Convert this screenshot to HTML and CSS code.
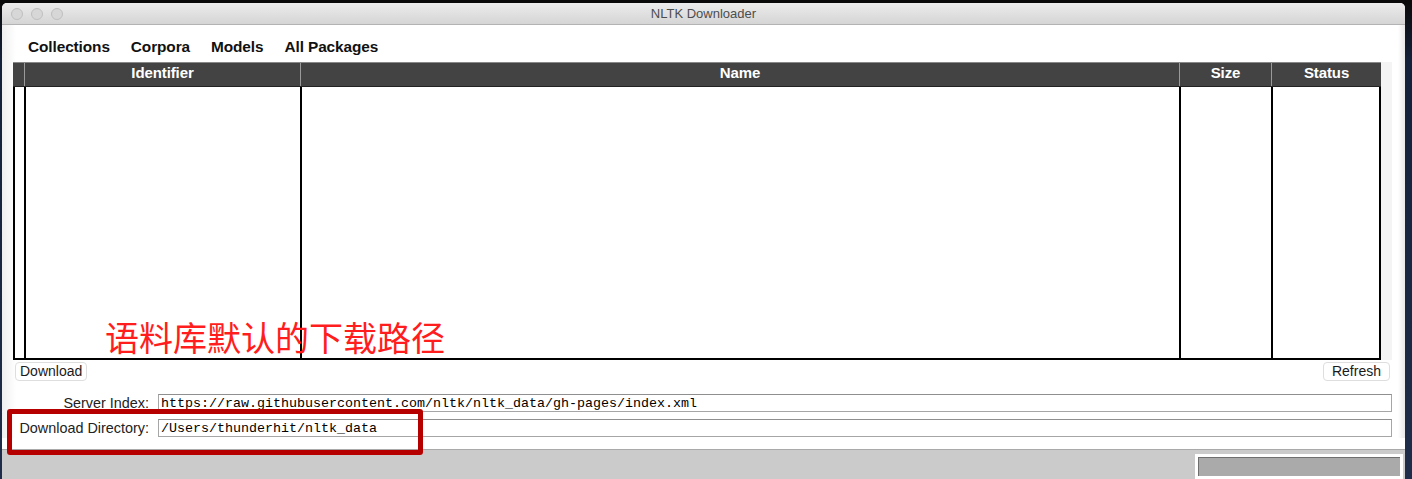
FILE: index.html
```html
<!DOCTYPE html>
<html lang="en">
<head>
<meta charset="utf-8">
<title>NLTK Downloader</title>
<link rel="stylesheet" href="styles.css">
</head>
<body>
<div class="desktop">
  <div class="window">
    <div class="titlebar">
      <div class="lights"><span class="light"></span><span class="light"></span><span class="light"></span></div>
      <div class="title">NLTK Downloader</div>
    </div>
    <div class="content">
      <div class="menubar">
        <span class="menu">Collections</span>
        <span class="menu">Corpora</span>
        <span class="menu">Models</span>
        <span class="menu">All Packages</span>
      </div>
      <div class="tablewrap">
        <div class="table">
          <div class="thead">
            <div class="th"></div>
            <div class="th">Identifier</div>
            <div class="th">Name</div>
            <div class="th">Size</div>
            <div class="th">Status</div>
          </div>
          <div class="tbody">
            <div class="td"></div>
            <div class="td"></div>
            <div class="td"></div>
            <div class="td"></div>
            <div class="td last"></div>
          </div>
        </div>
        <div class="scroll"></div>
      </div>
      <div class="buttons">
        <button class="btn">Download</button>
        <button class="btn refresh">Refresh</button>
      </div>
      <div class="fields">
        <div class="field">
          <span class="label">Server Index:</span>
          <div class="entry">https://raw.githubusercontent.com/nltk/nltk_data/gh-pages/index.xml</div>
        </div>
        <div class="field">
          <span class="label">Download Directory:</span>
          <div class="entry">/Users/thunderhit/nltk_data</div>
        </div>
      </div>
    </div>
    <div class="status">
      <div class="progress"><div class="bar"></div></div>
    </div>
    <div class="note">语料库默认的下载路径</div>
    <div class="highlight"></div>
  </div>
</div>
</body>
</html>
```

FILE: styles.css
```css
html, body {
  margin: 0;
  padding: 0;
  height: 100%;
  overflow: hidden;
}
body {
  background: #0d1627;
  font-family: "Liberation Sans", Arial, sans-serif;
}
.desktop {
  height: 479px;
  width: 1412px;
  background: linear-gradient(180deg, #0a0a0a 0px, #0a0a0a 3px, #14213a 60px, #1f2d4a 479px);
  padding: 3px 0 0 2px;
  box-sizing: border-box;
}
.window {
  position: relative;
  width: 1403px;
  height: 476px;
  background: #ffffff;
  border-radius: 5px 5px 0 0;
  display: flex;
  flex-direction: column;
  overflow: hidden;
}
.titlebar {
  height: 21px;
  background: linear-gradient(180deg, #ececec, #d5d5d5);
  border-bottom: 1px solid #b3b3b3;
  display: flex;
  align-items: center;
  position: relative;
}
.lights {
  display: flex;
  gap: 8px;
  padding-left: 9px;
}
.light {
  width: 10px;
  height: 10px;
  border-radius: 50%;
  border: 1px solid #bfbfbf;
  background: #d7d7d7;
}
.title {
  position: absolute;
  left: 0;
  right: 0;
  text-align: center;
  font-family: "Liberation Sans", Arial, sans-serif;
  font-size: 13px;
  color: #4d4d4d;
}
.content {
  flex: 1;
  display: flex;
  flex-direction: column;
  background: linear-gradient(90deg, #efefef 0px, #ffffff 14px, #ffffff 1396px, #e8e8e8 1403px);
}
.menubar {
  height: 37px;
  display: flex;
  align-items: center;
  padding: 6px 0 0 26px;
  box-sizing: border-box;
}
.menu {
  font-weight: bold;
  font-size: 15.4px;
  color: #111;
  margin-right: 21px;
  letter-spacing: -0.1px;
}
.tablewrap {
  display: flex;
  margin-left: 11px;
}
.table {
  width: 1368px;
}
.thead, .tbody {
  display: grid;
  grid-template-columns: 11px 276px 879px 92px 110px;
}
.thead {
  height: 25px;
  background: #434343;
  border-top: 1px solid #888;
  border-bottom: 1px solid #222;
  box-sizing: border-box;
}
.th {
  color: #fff;
  font-weight: bold;
  font-size: 15px;
  text-align: center;
  line-height: 20px;
  border-left: 1px solid #9a9a9a;
  letter-spacing: -0.1px;
}
.th:first-child {
  border-left: none;
}
.tbody {
  height: 273px;
  border-bottom: 2px solid #000;
  box-sizing: border-box;
}
.td {
  border-left: 2px solid #000;
  background: #fff;
}
.td.last {
  border-right: 2px solid #000;
}
.scroll {
  width: 11px;
  height: 298px;
  background: #f4f4f4;
}
.buttons {
  display: flex;
  justify-content: space-between;
  padding: 2px 15px 0 13px;
}
.btn {
  font-family: "Liberation Sans", Arial, sans-serif;
  font-size: 14px;
  color: #1a1a1a;
  background: #fff;
  border: 1px solid #dedede;
  border-radius: 4px;
  height: 19px;
  padding: 0 4px;
  line-height: 17px;
}
.refresh {
  padding: 0 8px;
}
.fields {
  display: flex;
  flex-direction: column;
  gap: 6px;
  padding-top: 12px;
}
.field {
  display: flex;
  align-items: center;
}
.label {
  width: 147px;
  text-align: right;
  font-size: 14.4px;
  color: #222;
  margin-right: 9px;
  line-height: 18px;
  padding-top: 1px;
}
.entry {
  width: 1234px;
  height: 18px;
  box-sizing: border-box;
  border: 1px solid #a6a6a6;
  border-top-color: #8f8f8f;
  font-family: "Liberation Mono", "Courier New", monospace;
  font-size: 13.33px;
  line-height: 17px;
  padding-left: 2px;
  color: #000;
  background: #fff;
}
.status {
  height: 29px;
  margin-top: 11px;
  background: #cbcbcb;
  border-top: 1px solid #a9a9a9;
  display: flex;
  justify-content: flex-end;
  align-items: flex-end;
  padding-right: 2px;
}
.progress {
  width: 208px;
  height: 25px;
  background: #fff;
  padding: 3px;
  box-sizing: border-box;
}
.bar {
  height: 100%;
  background: #aaaaaa;
  border-top: 1px solid #6f6f6f;
  border-left: 1px solid #6f6f6f;
  box-sizing: border-box;
}
.note {
  position: absolute;
  left: 103px;
  top: 314px;
  font-family: "Noto Sans CJK SC", sans-serif;
  font-size: 34px;
  line-height: 40px;
  color: #ff1d1d;
}
.highlight {
  position: absolute;
  left: 5px;
  top: 406px;
  width: 416px;
  height: 46px;
  border: 5px solid #b60000;
  border-radius: 3px;
  box-sizing: border-box;
}
```
